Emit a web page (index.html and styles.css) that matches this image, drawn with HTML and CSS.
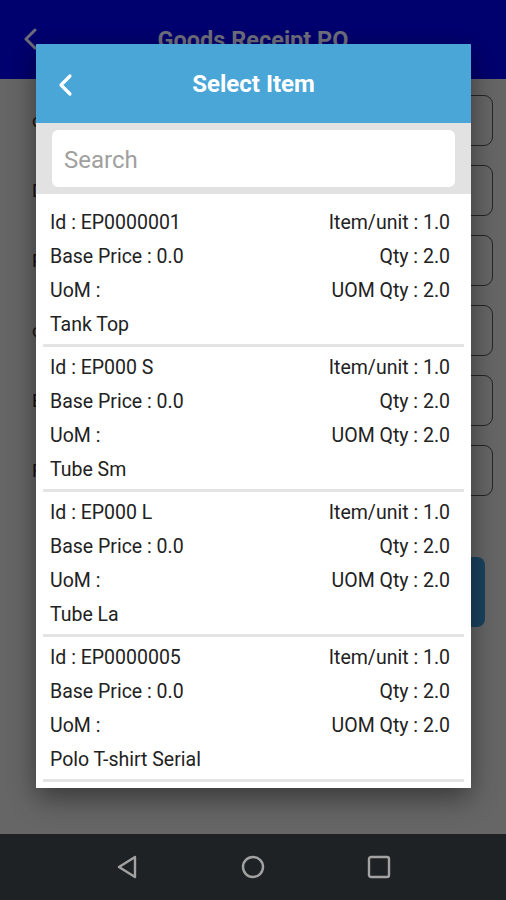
FILE: index.html
```html
<!DOCTYPE html>
<html lang="en">
<head>
  <meta charset="UTF-8">
  <meta name="viewport" content="width=device-width, initial-scale=1.0">
  <title>Goods Receipt PO</title>
  <link rel="stylesheet" href="styles.css">
</head>
<body>
  <div class="screen">
    <header class="appbar">
      <svg class="appbar-back" width="14" height="22" viewBox="0 0 14 22">
        <path d="M12 2 L3 11 L12 20" fill="none" stroke="#6c6c7a" stroke-width="3" stroke-linecap="round" stroke-linejoin="round"/>
      </svg>
      <h1>Goods Receipt PO</h1>
    </header>

    <main class="form">
      <div class="field"><label>customer</label><div class="input"></div></div>
      <div class="field"><label>Date</label><div class="input"></div></div>
      <div class="field"><label>PO No</label><div class="input"></div></div>
      <div class="field"><label>currency</label><div class="input"></div></div>
      <div class="field"><label>Branch</label><div class="input"></div></div>
      <div class="field"><label>Remarks</label><div class="input"></div></div>
      <div class="button-row"><div class="save"></div></div>
    </main>

    <nav class="navbar">
      <svg width="24" height="26" viewBox="0 0 24 26">
        <path d="M20 3 L4 13 L20 23 Z" fill="none" stroke="#a2a2a2" stroke-width="2.4" stroke-linejoin="round"/>
      </svg>
      <svg width="24" height="24" viewBox="0 0 24 24">
        <circle cx="12" cy="12" r="10" fill="none" stroke="#a2a2a2" stroke-width="2.4"/>
      </svg>
      <svg width="24" height="24" viewBox="0 0 24 24">
        <rect x="2" y="2" width="20" height="20" rx="2" fill="none" stroke="#a2a2a2" stroke-width="2.4"/>
      </svg>
    </nav>

    <div class="dialog">
      <div class="dialog-header">
        <svg class="dialog-back" width="18" height="24" viewBox="0 0 18 24">
          <path d="M14 3 L5 12 L14 21" fill="none" stroke="#fff" stroke-width="3.2" stroke-linecap="round" stroke-linejoin="round"/>
        </svg>
        <h2>Select Item</h2>
      </div>
      <div class="search-bar">
        <input class="search" type="text" placeholder="Search">
      </div>
      <div class="item-list">
        <div class="item">
          <div class="row"><span>Id : EP0000001</span><span>Item/unit : 1.0</span></div>
          <div class="row"><span>Base Price : 0.0</span><span>Qty : 2.0</span></div>
          <div class="row"><span>UoM :</span><span>UOM Qty : 2.0</span></div>
          <div class="row"><span>Tank Top</span></div>
        </div>
        <div class="item">
          <div class="row"><span>Id : EP000 S</span><span>Item/unit : 1.0</span></div>
          <div class="row"><span>Base Price : 0.0</span><span>Qty : 2.0</span></div>
          <div class="row"><span>UoM :</span><span>UOM Qty : 2.0</span></div>
          <div class="row"><span>Tube Sm</span></div>
        </div>
        <div class="item">
          <div class="row"><span>Id : EP000 L</span><span>Item/unit : 1.0</span></div>
          <div class="row"><span>Base Price : 0.0</span><span>Qty : 2.0</span></div>
          <div class="row"><span>UoM :</span><span>UOM Qty : 2.0</span></div>
          <div class="row"><span>Tube La</span></div>
        </div>
        <div class="item">
          <div class="row"><span>Id : EP0000005</span><span>Item/unit : 1.0</span></div>
          <div class="row"><span>Base Price : 0.0</span><span>Qty : 2.0</span></div>
          <div class="row"><span>UoM :</span><span>UOM Qty : 2.0</span></div>
          <div class="row"><span>Polo T-shirt Serial</span></div>
        </div>
      </div>
    </div>
  </div>
</body>
</html>
```

FILE: styles.css
```css
body {
  margin: 0;
  font-family: 'Roboto', 'Noto Sans', sans-serif;
  background-color: #666;
}
.screen {
  position: relative;
  width: 506px;
  height: 900px;
  display: flex;
  flex-direction: column;
  overflow: hidden;
}
.appbar {
  height: 79px;
  background-color: #00006f;
  display: flex;
  align-items: center;
}
.appbar-back {
  margin-left: 23px;
  margin-top: -2px;
}
.appbar h1 {
  flex: 1;
  margin: 0 0 0 -37px;
  text-align: center;
  font-size: 23.5px;
  font-weight: 700;
  color: #6e6e7c;
}
.form {
  flex: 1;
  background-color: #666;
  padding-top: 15px;
  display: flex;
  flex-direction: column;
  gap: 18px;
}
.field {
  height: 52px;
  display: flex;
  align-items: center;
  justify-content: space-between;
  padding: 0 13px 0 32px;
}
.field label {
  font-size: 18px;
  color: #151515;
}
.input {
  width: 300px;
  height: 49px;
  border: 1.5px solid #252525;
  border-radius: 9px;
}
.button-row {
  display: flex;
  justify-content: flex-end;
  padding: 43px 21px 0 0;
}
.save {
  width: 300px;
  height: 70px;
  border-radius: 8px;
  background-color: #1a4360;
}
.navbar {
  height: 66px;
  background-color: #1f2224;
  display: flex;
  align-items: center;
  justify-content: center;
  gap: 102px;
}
.dialog {
  position: absolute;
  left: 36px;
  top: 44px;
  width: 435px;
  height: 744px;
  background-color: #fff;
  border-radius: 2px 2px 0 0;
  box-shadow: 0 10px 28px rgba(0, 0, 0, 0.45);
  display: flex;
  flex-direction: column;
  overflow: hidden;
}
.dialog-header {
  height: 79px;
  background-color: #4ba6d8;
  display: flex;
  align-items: center;
  flex-shrink: 0;
}
.dialog-back {
  margin-left: 20px;
  margin-top: 2px;
}
.dialog-header h2 {
  flex: 1;
  margin: 0 0 0 -38px;
  text-align: center;
  color: #fff;
  font-size: 24px;
  font-weight: 700;
}
.search-bar {
  background-color: #e2e2e2;
  padding: 7px 16px;
  flex-shrink: 0;
}
.search {
  display: block;
  box-sizing: border-box;
  width: 100%;
  height: 57px;
  border: none;
  border-radius: 6px;
  background-color: #fff;
  padding: 2px 12px 0;
  font-family: 'Roboto', sans-serif;
  font-size: 24px;
  outline: none;
}
.search::placeholder {
  color: #a0a0a0;
}
.item-list {
  padding-top: 8px;
}
.item {
  padding: 3px 21px 0 14px;
}
.item::after {
  content: '';
  display: block;
  height: 3px;
  margin: 3px -14px 0 -7px;
  background-color: #e4e4e4;
}
.row {
  height: 34px;
  display: flex;
  align-items: center;
  justify-content: space-between;
  font-size: 19.5px;
  color: #222;
}
```
